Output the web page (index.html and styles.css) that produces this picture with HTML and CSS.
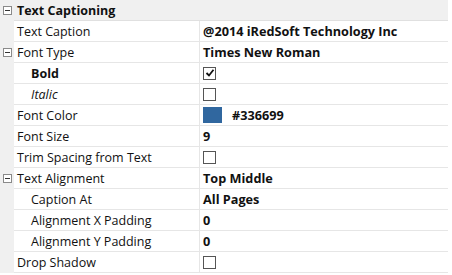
FILE: index.html
```html
<!DOCTYPE html>
<html lang="en">
<head>
    <meta charset="UTF-8">
    <title>Text Captioning</title>
    <link rel="stylesheet" href="styles.css">
</head>
<body>
    <div class="grid">
        <div class="row category">
            <div class="gutter"><span class="toggle"></span></div>
            <div class="name">Text Captioning</div>
        </div>
        <div class="row">
            <div class="gutter"></div>
            <div class="name">Text Caption</div>
            <div class="value">@2014 iRedSoft Technology Inc</div>
        </div>
        <div class="row">
            <div class="gutter"><span class="toggle"></span></div>
            <div class="name">Font Type</div>
            <div class="value">Times New Roman</div>
        </div>
        <div class="row">
            <div class="gutter"></div>
            <div class="name sub bold">Bold</div>
            <div class="value"><span class="check checked">
                <svg width="10" height="10" viewBox="0 0 10 10"><path d="M1.5 5 L4 7.5 L8.5 1.8" fill="none" stroke="#111" stroke-width="1.8"/></svg>
            </span></div>
        </div>
        <div class="row">
            <div class="gutter"></div>
            <div class="name sub italic">Italic</div>
            <div class="value"><span class="check"></span></div>
        </div>
        <div class="row">
            <div class="gutter"></div>
            <div class="name">Font Color</div>
            <div class="value"><span class="swatch"></span>#336699</div>
        </div>
        <div class="row">
            <div class="gutter"></div>
            <div class="name">Font Size</div>
            <div class="value">9</div>
        </div>
        <div class="row">
            <div class="gutter"></div>
            <div class="name">Trim Spacing from Text</div>
            <div class="value"><span class="check"></span></div>
        </div>
        <div class="row">
            <div class="gutter"><span class="toggle"></span></div>
            <div class="name">Text Alignment</div>
            <div class="value">Top Middle</div>
        </div>
        <div class="row">
            <div class="gutter"></div>
            <div class="name sub">Caption At</div>
            <div class="value">All Pages</div>
        </div>
        <div class="row">
            <div class="gutter"></div>
            <div class="name sub">Alignment X Padding</div>
            <div class="value">0</div>
        </div>
        <div class="row">
            <div class="gutter"></div>
            <div class="name sub">Alignment Y Padding</div>
            <div class="value">0</div>
        </div>
        <div class="row">
            <div class="gutter"></div>
            <div class="name">Drop Shadow</div>
            <div class="value"><span class="check"></span></div>
        </div>
    </div>
</body>
</html>
```

FILE: styles.css
```css
body {
    margin: 0;
    background-color: #fff;
    font-family: 'Open Sans', 'Noto Sans', sans-serif;
    font-size: 12.5px;
    color: #111;
}

.grid {
    width: 448px;
}

.row {
    display: flex;
    height: 21px;
}

.gutter {
    width: 14px;
    flex-shrink: 0;
    background-color: #f0f0f0;
    display: flex;
    align-items: center;
    justify-content: center;
}

.toggle {
    width: 7px;
    height: 7px;
    border: 1px solid #8a8a8a;
    background-color: #fff;
    position: relative;
}

.toggle::after {
    content: '';
    position: absolute;
    left: 1px;
    right: 1px;
    top: 3px;
    height: 1px;
    background-color: #333;
}

.name {
    width: 182px;
    padding-left: 3px;
    flex-shrink: 0;
    border-right: 1px solid #e6e6e6;
    border-bottom: 1px solid #e6e6e6;
    display: flex;
    align-items: center;
    white-space: nowrap;
}

.name.sub {
    padding-left: 17px;
    width: 168px;
}

.bold {
    font-weight: bold;
}

.italic {
    font-style: italic;
}

.value {
    flex: 1;
    padding-left: 3px;
    border-bottom: 1px solid #e6e6e6;
    display: flex;
    align-items: center;
    font-weight: bold;
    font-size: 12.7px;
    white-space: nowrap;
}

.category {
    background-color: #f0f0f0;
}

.category .name {
    flex: 1;
    border-right: none;
    font-weight: bold;
    border-bottom: 1px solid #e0e0e0;
}

.check {
    width: 11px;
    height: 11px;
    border: 1px solid #555;
    background-color: #fff;
    display: flex;
    align-items: center;
    justify-content: center;
}

.swatch {
    width: 19px;
    height: 16px;
    background-color: #30679f;
    margin-right: 10px;
}
```
